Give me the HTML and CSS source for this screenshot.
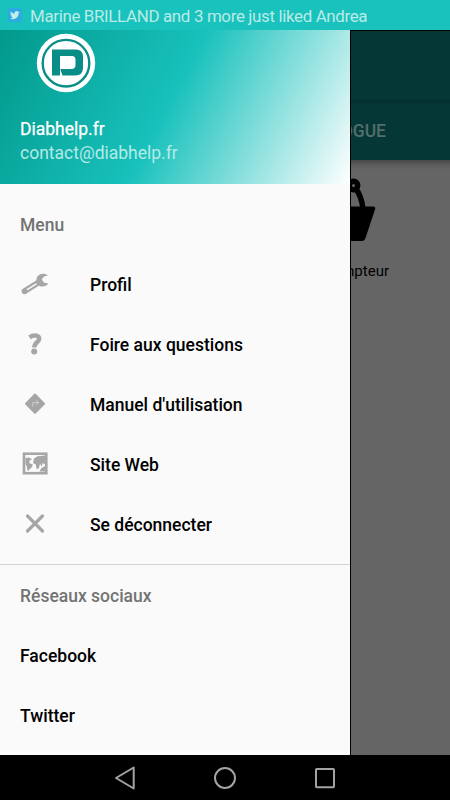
FILE: index.html
```html
<!DOCTYPE html>
<html lang="fr">
<head>
<meta charset="utf-8">
<title>Diabhelp</title>
<link rel="stylesheet" href="styles.css">
</head>
<body>
<div class="screen">
  <div class="status">
    <svg class="tw" viewBox="0 0 14 14"><rect width="14" height="14" rx="2" fill="#2ba9e1"/><path d="M11.7 4.1c-.4.2-.8.3-1.2.3.4-.3.7-.7.9-1.1-.4.2-.9.4-1.3.5a2.1 2.1 0 0 0-3.6 1.9A6 6 0 0 1 2.700 3.500a2.100 2.100 0 0 0 .65 2.800c-.35 0-.7-.1-1-.27 0 1 .7 1.900 1.700 2.100-.3.1-.6.1-.95 0 .27.850 1.050 1.400 2 1.450A4.200 4.200 0 0 1 2 10.400c3.800 2.300 8.600-.3 8.600-5.100.4-.3.8-.7 1.100-1.200z" fill="#c4ece8"/></svg>
    <span>Marine BRILLAND and 3 more just liked Andrea</span>
  </div>
  <div class="main">
    <aside class="drawer">
      <header class="account">
        <svg class="logo" viewBox="0 0 60 62"><circle cx="30" cy="31" r="29.200" fill="#fff"/><circle cx="30" cy="31.200" r="23.300" fill="none" stroke="#098d87" stroke-width="2.400"/><path fill="#098d87" d="M16 17.500H40Q47 17.500 47 25V36Q47 43.500 39 43.500H26.500L24.500 38V37H35.500Q39.500 37 39.500 33V28Q39.500 24 36 24H24V43.500H16Z"/></svg>
        <div class="name">Diabhelp.fr</div>
        <div class="mail">contact@diabhelp.fr</div>
      </header>
      <nav class="menu">
        <div class="heading">Menu</div>
        <div class="item"><svg viewBox="0 0 30 30"><path d="M4.500 22.200 18 13.700" stroke="#a6a6a6" stroke-width="5.800" stroke-linecap="round"/><path d="M7.500 20.400 16 15.100" stroke="#fafafa" stroke-width="1.600" stroke-linecap="round"/><path d="M28 6.500C22.500 2.500 15.500 6 16.600 12.500L19.500 17C23 18.300 26.700 17.300 28.300 14.500L23.800 13.400 21.800 10.400 23.900 7.500Z" fill="#a6a6a6"/></svg><span>Profil</span></div>
        <div class="item"><svg viewBox="0 0 30 30"><path d="M9.500 8.300Q13 6 16.500 6.700 19.800 7.600 19 10.800C18 13.700 14.400 13.500 14.300 18.500" fill="none" stroke="#a6a6a6" stroke-width="4.400"/><circle cx="14.200" cy="22.500" r="3" fill="#a6a6a6"/></svg><span>Foire aux questions</span></div>
        <div class="item"><svg viewBox="0 0 30 30"><path d="M15 5.500 24 14.700 15 23.900 6 14.700Z" fill="#a6a6a6" stroke="#a6a6a6" stroke-width="2" stroke-linejoin="round"/><path d="M12.800 17.500V13.600H18M16.300 11.500 18.500 13.600 16.300 15.700" fill="none" stroke="#d2d2d2" stroke-width=".9"/></svg><span>Manuel d'utilisation</span></div>
        <div class="item"><svg viewBox="0 0 30 30"><rect x="4" y="4.700" width="22.300" height="19.500" fill="#fafafa" stroke="#a6a6a6" stroke-width="2.600"/><path d="M5.500 9 9 8.500 12.500 10.500 10 11 9 14 12.800 15.500 12 18 9 21 7.500 22 7 18 5.500 15ZM14 9.500 17.500 7.300 25 6.500V15.500L23 14 21.500 17.500 20 14.500 19 19 16.800 20.500 15.800 15.500 13 14ZM21 19.500 25 17V22.500H19.500Z" fill="#a6a6a6"/></svg><span>Site Web</span></div>
        <div class="item"><svg viewBox="0 0 30 30"><path d="M7.500 7 22.500 22M22.500 7 7.500 22" stroke="#a6a6a6" stroke-width="3.200" stroke-linecap="round"/></svg><span>Se déconnecter</span></div>
      </nav>
      <nav class="social">
        <div class="heading">Réseaux sociaux</div>
        <div class="item">Facebook</div>
        <div class="item">Twitter</div>
      </nav>
    </aside>
    <section class="behind">
      <div class="toolbar"></div>
      <div class="tabs"><span>CATALOGUE</span></div>
      <div class="content">
        <svg class="basket" viewBox="0 0 25 66"><circle cx="2.500" cy="8.500" r="4.200" fill="none" stroke="#000" stroke-width="5.400"/><path d="M5 12Q10.500 19 12 32" fill="none" stroke="#000" stroke-width="5.500"/><path d="M0 29.500H22.500Q25 30 24 32.500L14.500 61Q13.500 64 11 64H0Z"/></svg>
        <div class="app">Compteur</div>
      </div>
    </section>
  </div>
  <footer class="navbar">
    <svg viewBox="0 0 30 30"><path d="M23.700 4.500V25.500L6 15Z"/></svg>
    <svg viewBox="0 0 30 30"><circle cx="15" cy="15" r="10"/></svg>
    <svg viewBox="0 0 30 30"><rect x="6" y="6" width="18" height="18.200" rx=".8"/></svg>
  </footer>
</div>
</body>
</html>
```
FILE: styles.css
```css
body { margin: 0; font-family: Roboto, sans-serif; font-size: 17.5px; line-height: 24px; }
.screen { width: 450px; height: 800px; display: flex; flex-direction: column; overflow: hidden; }
.status { height: 30px; flex: none; display: flex; align-items: center; gap: 8px; padding: 2px 0 0 8px; box-sizing: border-box; background: #1ac2bd; color: #b9ebe7; font-size: 16.9px; letter-spacing: -.34px; white-space: nowrap; }
.tw { width: 14px; height: 14px; margin-top: -2px; }
.main { height: 725px; flex: none; display: flex; }
.drawer { width: 350px; flex: none; background: #fafafa; }
.account { height: 154px; box-sizing: border-box; padding: 2px 20px 0; background: linear-gradient(117.6deg, #009688, #18c1bc 50%, #fff) 0 -30px / 350px 184px no-repeat; }
.logo { display: block; width: 60px; height: 62px; margin: 0 0 23px 16px; }
.name { color: #fff; font-weight: 400; font-size: 17.5px; -webkit-text-stroke: .25px #fff; }
.mail { color: #b5eae6; }
.menu { padding: 10px 0; }
.social { border-top: 1px solid #d3d3d3; padding-top: 1px; }
.heading, .item { height: 60px; display: flex; align-items: center; padding: 0 20px; font-weight: 500; font-size: 17.5px; }
.heading { color: #737373; }
.menu .heading, .menu span { box-sizing: border-box; padding-top: 2px; }
.item { color: #000; }
.item svg { width: 30px; height: 30px; margin-right: 40px; }
.behind { width: 100px; box-sizing: border-box; border-left: 1px solid #000; border-top: 1px solid #000; background: #656565; overflow: hidden; }
.toolbar { height: 69px; background: #043735; }
.tabs { height: 60px; box-sizing: border-box; padding-top: 2px; display: flex; align-items: center; justify-content: flex-end; background: linear-gradient(#032d2b, #043735 5px); color: #536e6c; font-weight: 500; white-space: nowrap; }
.tabs span { margin-right: 64px; }
.content { height: 595px; background: linear-gradient(#464646, #5c5c5c 5px, #656565 10px); }
.basket { display: block; width: 25px; height: 66px; padding-top: 17px; }
.app { display: flex; justify-content: flex-end; margin-right: 61px; padding-top: 16px; font-size: 15px; line-height: 24px; }
.navbar { height: 45px; flex: none; display: flex; justify-content: center; align-items: center; gap: 70px; background: #000; }
.navbar svg { width: 30px; height: 30px; fill: none; stroke: #a3a3a3; stroke-width: 2; stroke-linejoin: round; }
```
